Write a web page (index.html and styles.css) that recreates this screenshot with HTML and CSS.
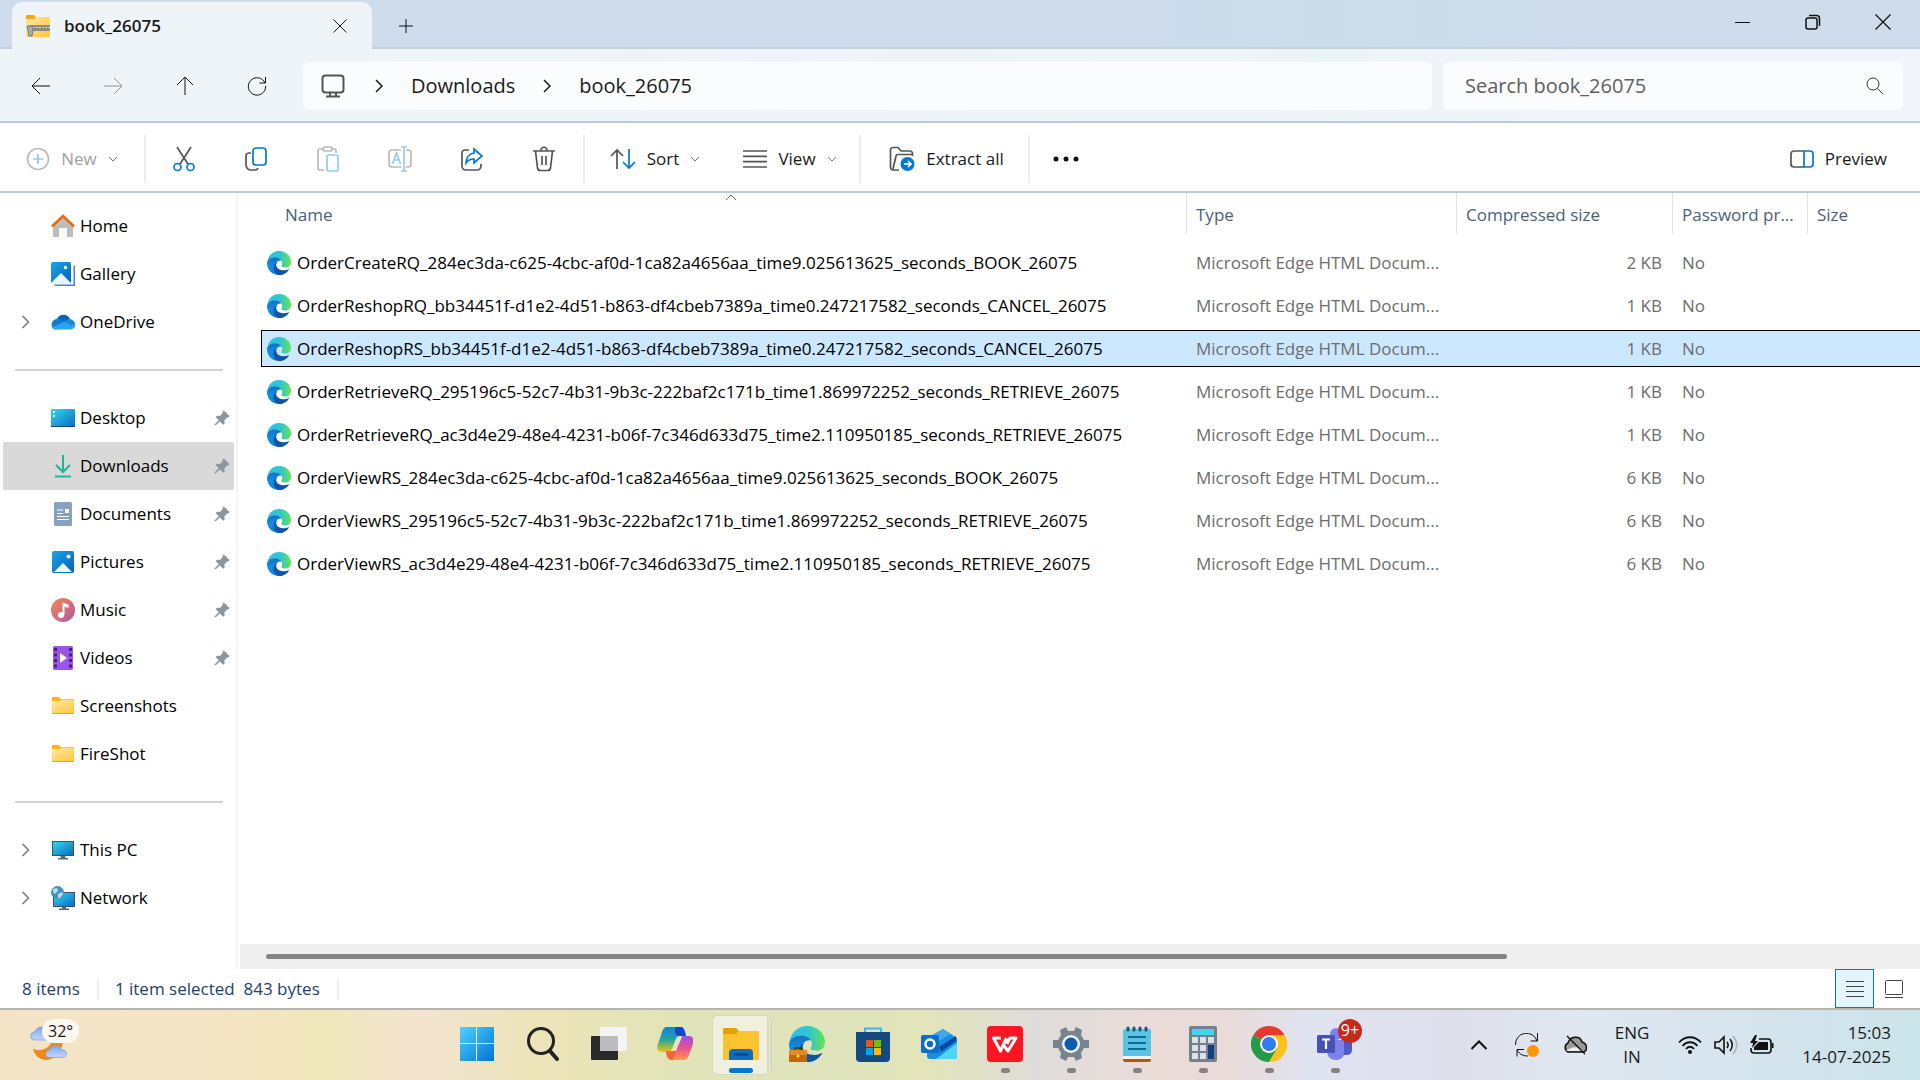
FILE: index.html
```html
<!DOCTYPE html>
<html lang="en">
<head>
  <meta charset="UTF-8" />
  <meta name="viewport" content="width=device-width, initial-scale=1.0" />
  <title>book_26075</title>
  <link rel="stylesheet" href="styles.css">
</head>
<body>
  <!-- Shared icons -->
  <svg class="sprite" width="0" height="0" aria-hidden="true">
    <defs>
      <linearGradient id="gTeal" x1="0" y1="0" x2="1" y2="0"><stop offset="0" stop-color="#31bdf0"/><stop offset=".55" stop-color="#2fc6cf"/><stop offset="1" stop-color="#66e44e"/></linearGradient>
      <linearGradient id="gBlue" x1="0" y1="0" x2="0" y2="1"><stop offset="0" stop-color="#1b6fc0"/><stop offset=".5" stop-color="#0b8fe8"/><stop offset="1" stop-color="#0d7fd8"/></linearGradient>
      <linearGradient id="gScreen" x1="0" y1="0" x2="1" y2="1"><stop offset="0" stop-color="#35d7ea"/><stop offset="1" stop-color="#0b6cc4"/></linearGradient>
      <linearGradient id="gPic" x1="0" y1="0" x2="1" y2="1"><stop offset="0" stop-color="#1ba4ea"/><stop offset="1" stop-color="#0560b6"/></linearGradient>
      <linearGradient id="gFolder" x1="0" y1="0" x2="1" y2="1"><stop offset="0" stop-color="#ffe9a2"/><stop offset="1" stop-color="#ffc838"/></linearGradient>
      <linearGradient id="gWin" x1="0" y1="0" x2="1" y2="1"><stop offset="0" stop-color="#4fd2ff"/><stop offset="1" stop-color="#0074d4"/></linearGradient>
      <linearGradient id="gCloud" x1="0" y1="0" x2="0" y2="1"><stop offset="0" stop-color="#7fa6ea"/><stop offset="1" stop-color="#c3d8fa"/></linearGradient>
    </defs>
    <symbol id="edge" viewBox="0 0 24 24">
      <path fill="url(#gTeal)" d="M.3 11C1 4.500 6 0 12 0c7 0 12 5 12 10.500C24 14.500 21.500 16.500 18.500 16.500c-2.500 0-4.200-.8-4.200-1.600 0-.6 1-1 1-2.900 0-3-3.300-5-7-5C4.500 7 1.500 9 .3 11z"/>
      <path fill="url(#gBlue)" d="M0 12c.5-3.500 4-5.500 8-5.500 3.500 0 6 1.700 6.500 3C11.500 9 9 11 9 14c0 4.500 3.500 8.500 8 8.800-1.500.8-3 1.200-5 1.200C5 24 0 18.500 0 12z"/>
      <path fill="#0f55a3" d="M10 11.500C9 13 9 14 9.300 15c1 3.200 4.300 4.300 7.700 4.300 2.500 0 4.500-1.300 5.300-1.300C20 22 16.500 24 12.500 24 8.500 23.500 6.500 20 6.500 17s1.800-4.700 3.500-5.500z"/>
    </symbol>
    <symbol id="pin" viewBox="0 0 16 16"><path fill="#8b979e" d="M9.800.5 15.500 6l-.8 1.300-1.700.2-2.600 3 .2 3.200-1.500 1-3.300-3.200L1.400 15.600l-1-1L4.700 10.300 1.700 7.300l1-1.500 3.100.2 2.900-2.700L8.600 1z"/></symbol>
    <symbol id="right" viewBox="0 0 8 14"><path d="M1 1l6 6-6 6" fill="none" stroke="currentColor" stroke-width="1.500"/></symbol>
    <symbol id="down" viewBox="0 0 10 6"><path d="M1 1l4 4 4-4" fill="none" stroke="#777"/></symbol>
    <symbol id="folder" viewBox="0 0 24 20">
      <path fill="#f9b612" d="M1 2a1 1 0 0 1 1-1h6l1.500 2H23v4H1z"/>
      <path fill="url(#gFolder)" d="M1 5h8l1.500-1.500H23V18H1z"/><path fill="#e8a91a" d="M1 17h22v1H1z"/>
    </symbol>
    <symbol id="picture" viewBox="0 0 24 24"><rect x="1" y="1" width="22" height="22" rx="2" fill="url(#gPic)"/><path d="M3 22l9-9 9 9z" fill="#eef7ff"/><circle cx="17.500" cy="6.500" r="2" fill="#fff"/></symbol>
    <symbol id="monitor" viewBox="0 0 24 24"><path d="M1 3h22v15H1z" fill="#40505e"/><path d="M2 4h20v13H2z" fill="url(#gScreen)"/><path d="M9.500 18h5v2H17v1.500H7V20h2.500z" fill="#5b6c79"/></symbol>
    <symbol id="cloud" viewBox="0 0 24 15"><path fill="url(#gCloud)" stroke="#7398df" stroke-width=".7" d="M5 14a4 4 0 0 1-.4-8C6 2.500 9 .8 12 1c3 .2 5 2 5.700 4.500C21 5.500 23.500 7 23.500 10c0 2.500-2 4-4 4z"/></symbol>
  </svg>

  <header class="titlebar">
    <div class="tab">
      <svg width="24" height="24" viewBox="0 0 24 24"><path d="M0 1h8l2 2v4H0z" fill="#f5a80e"/><path d="M0 5h8l2-2h14v20H0z" fill="url(#gFolder)"/><path d="M4 11h20v6H4z" fill="#8e8b80"/><path d="M4 13.500h20" stroke="#d5d1c4" stroke-dasharray="2 1"/><path d="M1 12h6v4l-1 6H3l-1-6z" fill="#a6abb0" stroke="#74797e"/></svg>
      <span class="tab-title">book_26075</span>
      <button class="tab-close" aria-label="Close tab"><svg width="16" height="16" viewBox="0 0 16 16"><path d="M1.500 1.500l13 13M14.500 1.500l-13 13"/></svg></button>
    </div>
    <button class="new-tab" aria-label="New tab"><svg width="16" height="16" viewBox="0 0 16 16"><path d="M8 1v14M1 8h14"/></svg></button>
    <div class="window-controls">
      <button aria-label="Minimize"><svg width="16" height="16" viewBox="0 0 16 16"><path d="M0 8.500h15"/></svg></button>
      <button aria-label="Restore"><svg width="16" height="16" viewBox="0 0 16 16" stroke-width="1.500"><rect x="1" y="4" width="11" height="11" rx="2"/><path d="M4 1.500h7.500a3 3 0 0 1 3 3V12"/></svg></button>
      <button aria-label="Close"><svg width="16" height="16" viewBox="0 0 16 16" stroke-width="1.300"><path d="M.5.5l15 15M15.500.5l-15 15"/></svg></button>
    </div>
  </header>

  <nav class="navbar">
    <div class="nav-buttons">
      <button aria-label="Back"><svg width="20" height="20" viewBox="0 0 20 20"><path d="M19 10H1.500M9 2l-8 8 8 8"/></svg></button>
      <button aria-label="Forward" disabled><svg width="20" height="20" viewBox="0 0 20 20"><path d="M1 10h17.500M11 2l8 8-8 8"/></svg></button>
      <button aria-label="Up"><svg width="20" height="20" viewBox="0 0 20 20"><path d="M10 19V1.500M2 9l8-8 8 8"/></svg></button>
      <button aria-label="Refresh"><svg width="20" height="20" viewBox="0 0 20 20"><path d="M18 7A8.700 8.700 0 1 0 18.700 10M18.500 1v6h-6"/></svg></button>
    </div>
    <div class="address">
      <svg width="24" height="24" viewBox="0 0 24 24" class="pc"><rect x="1.500" y="1.500" width="21" height="17" rx="3"/><path d="M9 19v3.500M15 19v3.500M5 22.500h14"/></svg>
      <svg width="8" height="14"><use href="#right"/></svg>
      <a href="#">Downloads</a>
      <svg width="8" height="14"><use href="#right"/></svg>
      <a href="#">book_26075</a>
    </div>
    <div class="search">
      <input type="text" aria-label="Search" placeholder="Search book_26075">
      <svg width="18" height="18" viewBox="0 0 18 18"><circle cx="7" cy="7" r="6"/><path d="M11.500 11.500l5.500 5.500"/></svg>
    </div>
  </nav>

  <div class="toolbar">
    <button class="tool new" disabled><svg width="24" height="24" viewBox="0 0 24 24"><circle cx="12" cy="12" r="10.500" stroke="#bbb"/><path d="M12 7v10M7 12h10" stroke="#8fc6f0"/></svg>New<svg class="drop" width="10" height="6"><use href="#down"/></svg></button>
    <div class="sep"></div>
    <div class="icon-tools">
      <button aria-label="Cut"><svg width="24" height="26" viewBox="0 0 24 26"><path d="M5 1l11 17M19 1L8 18"/><g stroke="#0078d4"><circle cx="5.500" cy="21" r="3.500"/><circle cx="18.500" cy="21" r="3.500"/></g></svg></button>
      <button aria-label="Copy"><svg width="24" height="26" viewBox="0 0 24 26"><path d="M7 7H5a3 3 0 0 0-3 3v9a5 5 0 0 0 5 5h4a3 3 0 0 0 3-2"/><rect x="9" y="2" width="13" height="17" rx="3" stroke="#0078d4"/></svg></button>
      <button aria-label="Paste" disabled><svg width="24" height="26" viewBox="0 0 24 26"><g stroke="#bbb"><path d="M7 3H4a2 2 0 0 0-2 2v17a2 2 0 0 0 2 2h4M15 3h3a2 2 0 0 1 2 2v2"/><rect x="7" y="1" width="9" height="4" rx="2"/></g><rect x="11" y="9" width="11" height="16" rx="2" stroke="#99cbf0"/></svg></button>
      <button aria-label="Rename" disabled><svg width="24" height="26" viewBox="0 0 24 26"><path d="M13 4H4a3 3 0 0 0-3 3v11a3 3 0 0 0 3 3h9M18 4h2a3 3 0 0 1 3 3v11a3 3 0 0 1-3 3h-2" stroke="#bbb"/><path d="M4.500 18l4-11 4 11M6 14h5M16 1v24M13 1h6M13 25h6" stroke="#99cbf0"/></svg></button>
      <button aria-label="Share"><svg width="24" height="26" viewBox="0 0 24 26"><path d="M9 4H5a3 3 0 0 0-3 3v13a4 4 0 0 0 4 4h11a4 4 0 0 0 4-4v-2"/><path d="M14 3l8 7-8 7v-4c-4 0-6 1-8 4 0-5 3-9 8-10z" stroke="#0078d4"/></svg></button>
      <button aria-label="Delete"><svg width="24" height="26" viewBox="0 0 24 26"><path d="M1 5h22M3.500 5l2 17a3 3 0 0 0 3 2.500h7a3 3 0 0 0 3-2.500l2-17M9 5c0-5 6-5 6 0M10 10v9M14 10v9"/></svg></button>
    </div>
    <div class="sep"></div>
    <button class="tool sort"><svg width="26" height="22" viewBox="0 0 26 22"><path d="M7 21V2M1 8l6-6 6 6"/><path d="M19 1v19M13 14l6 6 6-6" stroke="#0078d4"/></svg>Sort<svg class="drop" width="10" height="6"><use href="#down"/></svg></button>
    <button class="tool view"><svg width="24" height="18" viewBox="0 0 24 18"><path d="M0 1h24M0 6.300h24M0 11.700h24M0 17h24"/></svg>View<svg class="drop" width="10" height="6"><use href="#down"/></svg></button>
    <div class="sep"></div>
    <button class="tool extract"><svg width="26" height="26" viewBox="0 0 26 26"><path d="M10 24H4a2.500 2.500 0 0 1-2.500-2.500V4A2.500 2.500 0 0 1 4 1.500h5L12 5h9a2.500 2.500 0 0 1 2.500 2.500V10M4 23L7 10a2 2 0 0 1 2-1.500h14"/><circle cx="18.500" cy="18" r="7" fill="#0078d4" stroke="none"/><path d="M15 18h7M19 15l3 3-3 3" stroke="#fff"/></svg>Extract all</button>
    <div class="sep"></div>
    <button class="more" aria-label="See more"><svg width="26" height="6" viewBox="0 0 26 6"><g fill="#111" stroke="none"><circle cx="3" cy="3" r="2.500"/><circle cx="13" cy="3" r="2.500"/><circle cx="23" cy="3" r="2.500"/></g></svg></button>
    <button class="tool preview"><svg width="24" height="18" viewBox="0 0 24 18"><path d="M14 1H4a3 3 0 0 0-3 3v10a3 3 0 0 0 3 3h10"/><path d="M14 1h6a3 3 0 0 1 3 3v10a3 3 0 0 1-3 3h-6z" stroke="#0078d4"/></svg>Preview</button>
  </div>

  <main class="content">
    <aside class="sidebar">
      <a href="#"><svg class="ico" viewBox="0 0 24 24"><path d="M2 12l10-9 10 9v11h-6V14H8v9H2z" fill="#bdbdbd"/><path d="M1 12.500L12 2l11 10.500" fill="none" stroke="#e96a0c" stroke-width="2.600"/></svg>Home</a>
      <a href="#"><svg class="ico" viewBox="0 0 24 24"><path d="M22.500 3.500H24V24H3.500v-1.500h19z" fill="#3f86cc"/><rect width="20" height="22" rx="2" fill="url(#gPic)"/><path d="M0 21l10-10 10 10v1H0z" fill="#eaf5ff"/><circle cx="14.500" cy="5.500" r="1.700" fill="#fff"/></svg>Gallery</a>
      <a href="#"><svg class="arrow" viewBox="0 0 8 14"><use href="#right"/></svg><svg class="ico" viewBox="0 0 24 24"><path d="M6 9c2-5 10-6 13 0l-7 4z" fill="#0a5fb8"/><path d="M5 19.500C-1 19-1 10 5.500 9 10 8 13 12 18 15z" fill="#0f7bd8"/><path d="M18 9.500c8 0 8 10 1.500 10H5c-2 0-3-.5-4-2z" fill="#2ba6ea"/><path d="M18 9c3 0 5 2 6 5l-4 1.500-7-4z" fill="#1689dc"/></svg>OneDrive</a>
      <hr>
      <a href="#"><svg class="ico" viewBox="0 0 24 24"><rect y="3" width="24" height="18" rx="1" fill="url(#gScreen)"/><path d="M0 20h24v1H0z" fill="#124d78"/><path d="M2 5h2v2H2zM2 9h2v2H2z" fill="#fff"/></svg>Desktop<svg class="pin"><use href="#pin"/></svg></a>
      <a href="#" class="active"><svg class="ico" viewBox="0 0 24 24" fill="none" stroke="#20b594" stroke-width="2"><path d="M12 1v17M5 11l7 7 7-7M4 22.500h16"/></svg>Downloads<svg class="pin"><use href="#pin"/></svg></a>
      <a href="#"><svg class="ico" viewBox="0 0 24 24"><rect x="3" width="18" height="24" rx="1.500" fill="#87a1bf"/><path d="M6 8h6M6 11.500h6M6 14.500h12M6 17.500h12" stroke="#fff"/><path d="M14 7h4v4h-4z" fill="#fff"/></svg>Documents<svg class="pin"><use href="#pin"/></svg></a>
      <a href="#"><svg class="ico"><use href="#picture"/></svg>Pictures<svg class="pin"><use href="#pin"/></svg></a>
      <a href="#"><svg class="ico" viewBox="0 0 24 24"><defs><linearGradient id="gMusic" x2="1" y2="1"><stop stop-color="#f28b54"/><stop offset=".6" stop-color="#d06c80"/><stop offset="1" stop-color="#a05ba8"/></linearGradient></defs><circle cx="12" cy="12" r="12" fill="url(#gMusic)"/><circle cx="10" cy="17" r="3" fill="#fff"/><path d="M11.500 17V4.500l6 2V10l-4-1.300V17z" fill="#fff"/></svg>Music<svg class="pin"><use href="#pin"/></svg></a>
      <a href="#"><svg class="ico" viewBox="0 0 24 24"><rect x="2" width="20" height="24" rx="1.500" fill="#9a54ea"/><path d="M4.500 2v20M19.500 2v20" stroke="#43237a" stroke-width="3" stroke-dasharray="3 2.500"/><path d="M9 7l7 5-7 5z" fill="#fff"/></svg>Videos<svg class="pin"><use href="#pin"/></svg></a>
      <a href="#"><svg class="ico"><use href="#folder"/></svg>Screenshots</a>
      <a href="#"><svg class="ico"><use href="#folder"/></svg>FireShot</a>
      <hr>
      <a href="#"><svg class="arrow" viewBox="0 0 8 14"><use href="#right"/></svg><svg class="ico"><use href="#monitor"/></svg>This PC</a>
      <a href="#"><svg class="arrow" viewBox="0 0 8 14"><use href="#right"/></svg><svg class="ico" viewBox="0 0 24 24"><path d="M2 6h22v15H2z" fill="#40505e"/><path d="M3 7h20v13H3z" fill="url(#gScreen)"/><path d="M11 21h4v1.500h3V24H8v-1.500h3z" fill="#5b6c79"/><circle cx="6.500" cy="6.500" r="6.500" fill="#3f93bd"/><path d="M2 3l4-1 1 3-3 3-2-2zM7 8l4-2 1 2-3 4H7z" fill="#b7e0ee"/></svg>Network</a>
    </aside>

    <section class="files">
      <table>
        <colgroup>
          <col>
          <col class="c-type">
          <col class="c-compressed">
          <col class="c-password">
          <col class="c-size">
        </colgroup>
        <thead>
          <tr>
            <th><div class="name-head">Name<svg class="caret" width="12" height="7" viewBox="0 0 12 7"><path d="M1 6l5-5 5 5"/></svg></div></th>
            <th><div>Type</div></th>
            <th><div>Compressed size</div></th>
            <th><div>Password pr...</div></th>
            <th><div>Size</div></th>
          </tr>
        </thead>
        <tbody id="fileRows">
        </tbody>
      </table>
      <div class="scrollbar"><div class="thumb"></div></div>
    </section>
  </main>

  <footer class="status">
    <span>8 items</span>
    <span class="selection">1 item selected&nbsp; 843 bytes</span>
    <div class="view-modes">
      <button class="on" aria-label="Details"><svg width="18" height="18" viewBox="0 0 18 18"><path d="M0 1.500h18M0 6.500h18M0 11.500h18M0 16.500h18"/></svg></button>
      <button aria-label="Large icons"><svg width="18" height="18" viewBox="0 0 18 18"><rect x=".5" y=".5" width="17" height="14" rx="1"/><path d="M0 17.500h18"/></svg></button>
    </div>
  </footer>

  <div class="taskbar">
    <div class="left-zone">
      <button class="weather" aria-label="Weather">
        <svg width="40" height="36" viewBox="0 0 40 36"><path d="M33 10c2 12-6 25-17 25C9 35 4 29 3 24c12 4 20-4 20-14z" fill="#f08a1d"/><use href="#cloud" x="0" y="1" width="24" height="15"/><use href="#cloud" x="15" y="19" width="22" height="15"/></svg>
        <span class="temp">32°</span>
      </button>
    </div>
    <div class="apps">
      <button aria-label="Start"><svg viewBox="0 0 36 36"><path fill="url(#gWin)" d="M1 1h16v16H1zM18 1h17v16H18zM1 18h16v17H1zM18 18h17v17H18z"/></svg></button>
      <button aria-label="Search"><svg viewBox="0 0 36 36" fill="none" stroke="#222"><circle cx="16" cy="15" r="12.500" stroke-width="3"/><path d="M25 25l7 8" stroke-width="4" stroke-linecap="round"/></svg></button>
      <button aria-label="Task view"><svg viewBox="0 0 36 36"><rect y="10" width="27" height="24" rx="1" fill="#2a2a2a"/><rect x="9" y="1" width="27" height="24" rx="1" fill="#f4f4f4"/><path d="M9 10h18v15H9z" fill="#bcbcbc"/></svg></button>
      <button aria-label="Copilot"><svg viewBox="0 0 36 36"><defs><linearGradient id="gCoA" x2="0" y2="1"><stop stop-color="#1a7de8"/><stop offset=".5" stop-color="#22a6a0"/><stop offset="1" stop-color="#f2c500"/></linearGradient><linearGradient id="gCoB" x2="0" y2="1"><stop stop-color="#9a4cf0"/><stop offset=".5" stop-color="#ec4f8d"/><stop offset="1" stop-color="#ff9a4d"/></linearGradient></defs><path d="M10 1h14c2 0 3 2 4 5l1 4h-6c-3 0-4 2-5 5l-3 8c-1 2-2 3-5 3H5c-4 0-6-3-4-8L5 6c1-3 2-5 5-5z" fill="url(#gCoA)"/><path d="M18 1h6c2 0 3 2 4 5l1 4h-6c-3 0-4-1-5-4z" fill="#1746c8"/><path d="M26 34H14c-3 0-4-2-5-8h5c3 0 4-2 5-5l3-7c1-3 2-4 5-4h5c4 0 5 3 4 8l-4 11c-1 3-2 5-6 5z" fill="url(#gCoB)"/><path d="M9 25h5c2 0 4-1 5 1l-3 8c-4 0-6-2-7-9z" fill="#f2673a"/><path d="M21 11h4l-6 14h-4z" fill="#e3e5c0"/></svg></button>
      <button class="current" aria-label="File Explorer"><svg viewBox="0 0 36 36"><path d="M0 3q0-1 1-1h12l3 3-3 4H0z" fill="#e3a008"/><path d="M0 8h13l3-3h20v29H0z" fill="#fdc22f"/><path d="M6 34V27q0-4 4-4h16q4 0 4 4v7z" fill="#0e6dc0"/><path d="M11 28.500h14" stroke="#073f80" stroke-width="2"/></svg></button>
      <button aria-label="Edge Work"><svg viewBox="0 0 36 36"><use href="#edge" width="36" height="36"/><path d="M0 24h18v12H0z" fill="#bf6a08"/><path d="M0 24h18v5H0z" fill="#e08b1b"/><path d="M6 24v-2h6v2" fill="none" stroke="#5a3305" stroke-width="1.500"/><circle cx="9" cy="30" r="1.500" fill="#ffe070"/></svg></button>
      <button aria-label="Microsoft Store"><svg viewBox="0 0 36 36"><path d="M10 8V2.500h16V8" fill="none" stroke="#35b9f0" stroke-width="2"/><path d="M1 6h34v26q0 4-4 4H5q-4 0-4-4z" fill="#134a80"/><path d="M11 14h7v7h-7z" fill="#f25022"/><path d="M19 14h7v7h-7z" fill="#7fba00"/><path d="M11 22h7v7h-7z" fill="#00a4ef"/><path d="M19 22h7v7h-7z" fill="#ffb900"/></svg></button>
      <button aria-label="Outlook"><svg viewBox="0 0 36 36"><path d="M6 12L22 3l14 9v18q0 3-3 3H9q-3 0-3-3z" fill="#1490df"/><path d="M10 10l12-7 8 5-20 12z" fill="#3fa7ea"/><path d="M18 21l17-11v5L20 26z" fill="#0b49a0"/><path d="M15 33l21-16v13q0 3-3 3z" fill="#50d5f6"/><rect y="9" width="18" height="18" rx="2" fill="#0e6cc8"/><circle cx="9" cy="18" r="4.500" fill="none" stroke="#fff" stroke-width="2.500"/></svg></button>
      <button class="running" aria-label="WPS Office"><svg viewBox="0 0 36 36"><rect width="36" height="36" rx="4" fill="#fd1522"/><path d="M14 12H6.500l7 13 6-13M16.500 19l4.500 6 8-13h-6l-3 6" fill="none" stroke="#fff" stroke-width="3" stroke-linejoin="round"/></svg></button>
      <button class="running" aria-label="Settings"><svg viewBox="0 0 36 36"><path d="M13 1l2 4h6l2-4 6 3-1 5 3 5 5 0v8l-5 0-3 5 1 5-6 3-2-4h-6l-2 4-6-3 1-5-3-5H0v-8h5l3-5-1-5z" fill="#78838d"/><circle cx="18" cy="18" r="9" fill="#eaf0f4"/><circle cx="18" cy="18" r="6.500" fill="#0d5bab"/></svg></button>
      <button class="running" aria-label="Notepad"><svg viewBox="0 0 36 36"><path d="M4 30h28v4q0 2-2 2H6q-2 0-2-2z" fill="#b5560f"/><path d="M4 29h28v4H4z" fill="#f3f3f3"/><path d="M4 5q0-2 2-2h24q2 0 2 2v25H4z" fill="#5cc3e2"/><path d="M9 11h18M9 17h18M9 23h18" stroke="#0b6b90" stroke-width="2"/><path d="M9 2v2M15 2v2M21 2v2M27 2v2" stroke="#0b5a7c" stroke-width="3" stroke-linecap="round"/></svg></button>
      <button class="running" aria-label="Calculator"><svg viewBox="0 0 36 36"><rect x="4" width="28" height="36" rx="2" fill="#74808a"/><path d="M7 3h22v6H7z" fill="#42d3f7"/><path d="M7 11h6v6H7zM15 11h6v6h-6zM23 11h6v6h-6zM7 19h6v6H7zM15 19h6v6h-6zM7 27h6v6H7zM15 27h6v6h-6z" fill="#dbe1e8"/><path d="M23 19h6v14h-6z" fill="#123f80"/></svg></button>
      <button class="running" aria-label="Chrome"><svg viewBox="0 0 36 36"><path d="M18 18L2.400 9A18 18 0 0 1 33.600 9z" fill="#e33b2e"/><path d="M18 18l15.600-9A18 18 0 0 1 18 36z" fill="#fcc21b"/><path d="M18 18l8 4.500L18 36A18 18 0 0 1 2.400 9z" fill="#259a48"/><path d="M18 9h15.600A18 18 0 0 1 18 36l8-13z" fill="#fcc21b"/><circle cx="18" cy="18" r="9" fill="#fff"/><circle cx="18" cy="18" r="7" fill="#2f7df0"/></svg></button>
      <button class="running" aria-label="Teams"><svg viewBox="0 0 36 36"><circle cx="29" cy="10" r="4" fill="#5059c9"/><path d="M24 14h11v10q0 5-6 5h-5z" fill="#5059c9"/><circle cx="19" cy="8" r="6" fill="#7b83eb"/><path d="M10 14h17v12q0 8-8 8t-9-8z" fill="#7b83eb"/><rect y="9" width="18" height="18" rx="1.500" fill="#4650b5"/><path d="M5 13.500h8M9 13.500V23" stroke="#fff" stroke-width="2.200"/></svg><span class="badge">9+</span></button>
    </div>
    <div class="tray">
      <button aria-label="Show hidden icons"><svg width="18" height="10" viewBox="0 0 18 10"><path d="M1.500 9L9 1.500 16.500 9" stroke-width="2"/></svg></button>
      <button aria-label="Updates"><svg width="24" height="24" viewBox="0 0 24 24"><path d="M.5 12A11 11 0 0 1 22 8M22.500 0v8h-7M2 23.500v-7h7M2 17c3 5 7 6 11 6"/><circle cx="18" cy="18" r="6" fill="#ff9808" stroke="none"/></svg></button>
      <button aria-label="OneDrive not signed in"><svg width="24" height="20" viewBox="0 0 24 20"><path d="M5 17a5 5 0 0 1 0-9c2-7 12-8 14-1 6 2 6 10 0 10z" fill="#999" stroke-width="1.500"/><path d="M3 16c6-5 12-5 18 0z" fill="#eee" stroke="none"/><path d="M4 1l18 18" stroke-width="1.500"/></svg></button>
      <button class="lang">ENG<br>IN</button>
      <button class="quick" aria-label="Network, volume and battery">
        <svg width="24" height="18" viewBox="0 0 24 18"><path d="M1 6.500C7-.5 17-.5 23 6.500M4.500 10c4-5 11-5 15 0M8 13c2-3 6-3 8 0" stroke-width="1.800"/><circle cx="12" cy="16" r="2" fill="#111" stroke="none"/></svg>
        <svg width="24" height="20" viewBox="0 0 24 20"><path d="M1 7v6h4l5 5V2L5 7z" stroke-width="1.600"/><path d="M13 7c1.500 2 1.500 4 0 6M16 4c3 4 3 8 0 12" stroke-width="1.500"/><path d="M19 1c5 6 5 12 0 18" stroke="#aab4bb" stroke-width="1.500"/></svg>
        <svg width="24" height="20" viewBox="0 0 24 20"><path d="M9 4h9a3 3 0 0 1 3 3v8a3 3 0 0 1-3 3H4a3 3 0 0 1-3-3v-2" stroke-width="1.600"/><path d="M9 7h9v8H4v-3zM22 8h1.500v5H22zM5 0L0 8h3l-1 5 6-7H5l2-6z" fill="#111" stroke="none"/></svg>
      </button>
      <button class="clock">15:03<br>14-07-2025</button>
    </div>
  </div>

  <script>
    const files = [
      { name: "OrderCreateRQ_284ec3da-c625-4cbc-af0d-1ca82a4656aa_time9.025613625_seconds_BOOK_26075", size: "2 KB" },
      { name: "OrderReshopRQ_bb34451f-d1e2-4d51-b863-df4cbeb7389a_time0.247217582_seconds_CANCEL_26075", size: "1 KB" },
      { name: "OrderReshopRS_bb34451f-d1e2-4d51-b863-df4cbeb7389a_time0.247217582_seconds_CANCEL_26075", size: "1 KB", selected: true },
      { name: "OrderRetrieveRQ_295196c5-52c7-4b31-9b3c-222baf2c171b_time1.869972252_seconds_RETRIEVE_26075", size: "1 KB" },
      { name: "OrderRetrieveRQ_ac3d4e29-48e4-4231-b06f-7c346d633d75_time2.110950185_seconds_RETRIEVE_26075", size: "1 KB" },
      { name: "OrderViewRS_284ec3da-c625-4cbc-af0d-1ca82a4656aa_time9.025613625_seconds_BOOK_26075", size: "6 KB" },
      { name: "OrderViewRS_295196c5-52c7-4b31-9b3c-222baf2c171b_time1.869972252_seconds_RETRIEVE_26075", size: "6 KB" },
      { name: "OrderViewRS_ac3d4e29-48e4-4231-b06f-7c346d633d75_time2.110950185_seconds_RETRIEVE_26075", size: "6 KB" }
    ];

    document.getElementById("fileRows").innerHTML = files.map(file => `
      <tr class="${file.selected ? "selected" : ""}">
        <td><div class="file-name"><svg class="ico"><use href="#edge"/></svg>${file.name}</div></td>
        <td>Microsoft Edge HTML Docum...</td>
        <td class="num">${file.size}</td>
        <td>No</td>
        <td></td>
      </tr>`).join("");
  </script>
</body>
</html>
```
FILE: styles.css
```css
* {
  box-sizing: border-box;
}

body {
  margin: 0;
  height: 100vh;
  display: flex;
  flex-direction: column;
  overflow: hidden;
  font-family: 'Segoe UI', 'Open Sans', 'Noto Sans', sans-serif;
  font-size: 17px;
  line-height: 24px;
  color: #1a1a1a;
  background: #fff;
}

.sprite {
  position: absolute;
}

svg {
  flex: none;
}

a {
  color: inherit;
  text-decoration: none;
}

button {
  display: flex;
  align-items: center;
  justify-content: center;
  padding: 0;
  border: none;
  background: none;
  font: inherit;
  color: inherit;
}

/* Title bar */
.titlebar {
  display: flex;
  align-items: stretch;
  height: 49px;
  padding: 2px 2px 0 12px;
  background: linear-gradient(to right, #cedcec 60%, #cbdeea 72%, #cfdcec 82%);
  box-shadow: inset 0 -2px #c2d0e2;
}

.titlebar button svg,
.nav-buttons svg {
  fill: none;
  stroke: #111;
}

.tab {
  display: flex;
  align-items: center;
  width: 360px;
  padding: 0 14px;
  border-radius: 10px 10px 0 0;
  background: #eff4f9;
}

.tab-title {
  flex: 1;
  margin-left: 14px;
  font-weight: 600;
}

.tab-close {
  width: 36px;
  height: 36px;
}

.new-tab {
  width: 68px;
}

.window-controls {
  display: flex;
  margin-left: auto;
  padding-bottom: 8px;
}

.window-controls button {
  width: 70px;
}

/* Address bar */
.navbar {
  display: flex;
  align-items: center;
  height: 74px;
  padding: 2px 17px 0 5px;
  background: linear-gradient(to right, #eef4f8 20%, #f0f3f9 40%, #edf4f8 70%, #f1f4fa 82%);
  border-bottom: 2px solid #bdcadb;
}

.nav-buttons {
  display: flex;
  margin-right: 10px;
}

.nav-buttons button {
  width: 72px;
  height: 48px;
}

.nav-buttons button:disabled {
  opacity: 0.4;
}

.address {
  flex: 1;
  display: flex;
  align-items: center;
  gap: 28px;
  height: 48px;
  padding: 0 18px;
  border-radius: 6px;
  background: #fbfcfe;
  font-size: 20px;
}

.address .pc {
  margin-right: 2px;
  fill: none;
  stroke: #555;
  stroke-width: 2;
}

.search {
  display: flex;
  align-items: center;
  width: 460px;
  height: 48px;
  margin-left: 11px;
  padding: 0 19px 0 22px;
  border-radius: 6px;
  background: #fbfcfe;
}

.search input {
  flex: 1;
  min-width: 0;
  padding: 0;
  border: none;
  outline: none;
  background: none;
  font: inherit;
  font-size: 20px;
}

.search input::placeholder {
  color: #606060;
}

.search svg {
  fill: none;
  stroke: #333;
}

/* Command bar */
.toolbar {
  display: flex;
  align-items: center;
  height: 70px;
  border-bottom: 2px solid #bdcadb;
  padding: 3px 33px 0 0;
}

.toolbar svg {
  fill: none;
  stroke: #555;
  stroke-width: 1.7;
}

.toolbar .tool svg.drop {
  stroke-width: 1;
}

.tool {
  gap: 11px;
  height: 48px;
  font-size: 17px;
}

.tool.new {
  width: 144px;
  color: #a0a0a0;
}

.tool.sort {
  width: 140px;
}

.tool.view {
  width: 118px;
  margin: 0 10px 0 6px;
}

.tool.extract {
  width: 167px;
  padding-left: 4px;
}

.more {
  width: 72px;
  height: 48px;
}

.tool.preview {
  margin-left: auto;
}

.sep {
  width: 2px;
  height: 48px;
  background: #ededed;
}

.icon-tools {
  display: flex;
  padding: 0 3px 0 2px;
}

.icon-tools button {
  width: 72px;
  height: 48px;
}

/* Main area */
.content {
  flex: 1;
  display: flex;
  min-height: 0;
}

.sidebar {
  width: 238px;
  padding: 9px 2px 9px 3px;
  border-right: 2px solid #f4f4f4;
}

.sidebar a {
  position: relative;
  display: flex;
  align-items: center;
  gap: 5px;
  height: 48px;
  padding: 0 4px 0 48px;
  border-radius: 2px;
  color: #000;
}

.sidebar a.active {
  background: #d9d9d9;
}

.sidebar hr {
  height: 2px;
  margin: 23px 11px 23px 12px;
  border: none;
  background: #d3d5d5;
}

.sidebar .arrow {
  position: absolute;
  left: 18px;
  width: 9px;
  height: 14px;
  color: #777;
}

.ico {
  width: 24px;
  height: 24px;
}

.pin {
  width: 16px;
  height: 16px;
  margin-left: auto;
}

.files {
  flex: 1;
  min-width: 0;
  display: flex;
  flex-direction: column;
  padding-left: 2px;
}

.files table {
  margin-left: 21px;
  border-collapse: separate;
  border-spacing: 0;
  table-layout: fixed;
}

.c-type {
  width: 270px;
}

.c-compressed {
  width: 216px;
}

.c-password {
  width: 135px;
}

.c-size {
  width: 113px;
}

.files th {
  height: 48px;
  padding: 0;
  vertical-align: top;
  font-weight: normal;
  text-align: left;
  color: #4c607a;
}

.files th div {
  height: 41px;
  padding: 10px 0 0 9px;
  border-left: 1px solid #e2e2e2;
}

.files th .name-head {
  position: relative;
  margin-left: 14px;
  border-left-color: transparent;
}

.caret {
  position: absolute;
  top: 1px;
  left: 50%;
  margin-left: -6px;
  fill: none;
  stroke: #666;
}

.files td {
  height: 43px;
  padding: 0 10px;
  border: 3px solid transparent;
  border-width: 3px 0;
  background-clip: padding-box;
  white-space: nowrap;
  color: #6d6d6d;
}

.files td:first-child {
  padding-left: 6px;
  color: #000;
}

.files .num {
  text-align: right;
}

.file-name {
  display: flex;
  align-items: center;
  gap: 6px;
}

.selected td {
  background-color: #cce8ff;
  box-shadow: inset 0 1px #000, inset 0 -1px #000;
}

.selected td:first-child {
  box-shadow: inset 0 1px #000, inset 0 -1px #000, inset 1px 0 #000;
}

.scrollbar {
  display: flex;
  align-items: center;
  height: 25px;
  margin-top: auto;
  padding-left: 26px;
  background: #efefef;
}

.thumb {
  width: 75%;
  height: 5px;
  border-radius: 3px;
  background: #858585;
}

/* Status bar */
.status {
  display: flex;
  align-items: center;
  height: 39px;
  padding: 0 7px 0 22px;
  color: #24406b;
}

.status span {
  line-height: 22px;
  padding-right: 17px;
  border-right: 2px solid #f0f0f0;
}

.status .selection {
  margin-left: 16px;
}

.view-modes {
  display: flex;
  margin-left: auto;
}

.view-modes button {
  width: 39px;
  height: 39px;
}

.view-modes .on {
  border: 1px solid #0078d4;
  background: #e5f3fb;
}

.view-modes svg {
  fill: none;
  stroke: #444;
}

/* Taskbar */
.taskbar {
  display: flex;
  height: 72px;
  border-top: 2px solid #b5b5ae;
  background: linear-gradient(to right, #f4e4c7, #f3e5c4 12%, #f0e7bb 17%, #f2e4d0 22%, #ece4b8 28%, #e0e4b8 36%, #dfe4bd 44%, #e2e4b8 48%, #dedcd9 54%, #ebdcd8 60%, #eadad8 64%, #e0e3f0 68%, #dfdfec 76%, #e0e7f0 82%, #d0e3ec 95%, #cbe4ea);
}

.left-zone {
  width: 444px;
  padding-left: 30px;
}

.weather {
  position: relative;
  height: 66px;
}

.temp {
  position: absolute;
  top: 9px;
  left: 12px;
  padding: 0 6px;
  border-radius: 12px;
  background: #faf7f1;
  font-size: 16px;
  line-height: 24px;
}

.apps {
  display: flex;
}

.apps button {
  position: relative;
  width: 66px;
  padding-bottom: 2px;
}

.apps svg {
  width: 36px;
  height: 36px;
}

.apps .current::before {
  content: "";
  position: absolute;
  top: 5px;
  left: 4px;
  width: 54px;
  height: 58px;
  border-radius: 6px;
  border: 1px solid #d5d9bd;
  border-right: 5px double #d5d9bd;
  background: #eff1de;
}

.apps .current svg {
  position: relative;
}

.apps .running::after,
.apps .current::after {
  content: "";
  position: absolute;
  bottom: 7px;
  left: 50%;
  width: 9px;
  height: 5px;
  margin-left: -4px;
  border-radius: 3px;
  background: #858280;
}

.apps .current::after {
  width: 24px;
  margin-left: -12px;
  background: #0078d4;
}

.badge {
  position: absolute;
  top: 9px;
  right: 6px;
  width: 24px;
  height: 24px;
  border-radius: 50%;
  background: #c42b1c;
  color: #fff;
  font-size: 16px;
  line-height: 23px;
}

.tray {
  display: flex;
  margin-left: auto;
  padding-right: 29px;
  font-size: 17px;
}

.tray svg {
  fill: none;
  stroke: #111;
}

.tray button {
  width: 48px;
}

.tray .lang {
  width: 66px;
}

.tray .quick {
  width: 122px;
  gap: 12px;
}

.tray .clock {
  width: 104px;
  justify-content: flex-end;
  text-align: right;
}
```
